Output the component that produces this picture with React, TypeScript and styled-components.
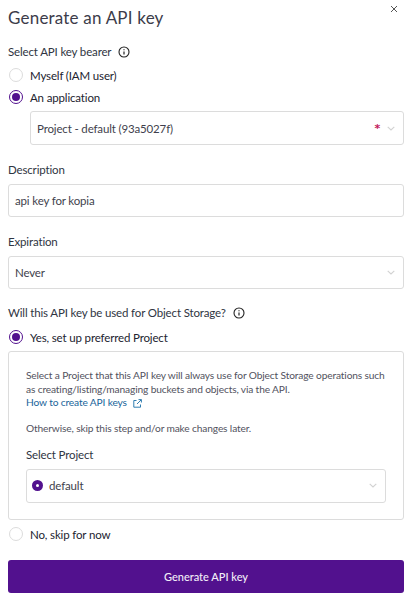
import React from "react";
import styled, { createGlobalStyle } from "styled-components";

const Global = createGlobalStyle`
  html, body { margin: 0; padding: 0; background: #fff; }
  body { font-family: Lato, "Liberation Sans", sans-serif; color: #3f3f4a; }
`;

const Page = styled.div`
  position: relative;
  width: 412px;
  height: 596px;
  box-sizing: border-box;
  padding: 0 8px;
  overflow: hidden;
  display: flex;
  flex-direction: column;
  font-size: 11.5px;
  letter-spacing: -0.15px;
`;

const Title = styled.h1`
  margin: 0;
  height: 35px;
  line-height: 35px;
  font-size: 17px;
  font-weight: 400;
  letter-spacing: 0.2px;
  color: #3c3c4a;
`;

const CloseButton = styled.button`
  position: absolute;
  top: 5px;
  right: 12px;
  width: 10px;
  height: 10px;
  padding: 0;
  border: 0;
  background: none;
  display: flex;
`;

const Label = styled.div<{ $top: number; $bottom: number }>`
  margin-top: ${(p) => p.$top}px;
  margin-bottom: ${(p) => p.$bottom}px;
  height: 18px;
  line-height: 18px;
  display: flex;
  align-items: center;
  gap: 7px;
  color: #2f3542;
`;

const RadioRow = styled.label<{ $height: number }>`
  height: ${(p) => p.$height}px;
  flex: none;
  display: flex;
  align-items: center;
  gap: 7px;
  padding-left: 1px;
  color: #22232f;
`;

const RadioDot = styled.span<{ $on?: boolean }>`
  width: 14px;
  height: 14px;
  flex: none;
  box-sizing: border-box;
  border-radius: 50%;
  border: ${(p) => (p.$on ? "1.5px solid #52118e" : "1.5px solid #dcdcdc")};
  background: #fff;
  display: flex;
  align-items: center;
  justify-content: center;
  &::after {
    content: "";
    display: ${(p) => (p.$on ? "block" : "none")};
    width: 8px;
    height: 8px;
    border-radius: 50%;
    background: #52118e;
  }
`;

const Field = styled.div<{ $indent?: number; $height?: number; $top?: number }>`
  margin-left: ${(p) => p.$indent ?? 0}px;
  margin-top: ${(p) => p.$top ?? 0}px;
  height: ${(p) => p.$height ?? 33}px;
  flex: none;
  box-sizing: border-box;
  border: 1px solid #dcdcdc;
  border-radius: 3px;
  background: #fff;
  display: flex;
  align-items: center;
  padding: 0 8px 0 6px;
  color: #3f3f4d;
`;

const FieldText = styled.span`
  flex: 1;
`;

const Required = styled.span`
  color: #c2185b;
  font-size: 11px;
  font-weight: 700;
  line-height: 1;
  margin-right: 7px;
  font-family: "DejaVu Sans", sans-serif;
`;

const ProjectDot = styled.span`
  width: 11px;
  height: 11px;
  flex: none;
  border-radius: 50%;
  background: #52118e;
  margin: 0 6px 0 -1px;
  display: flex;
  align-items: center;
  justify-content: center;
  &::after {
    content: "";
    width: 3px;
    height: 3px;
    border-radius: 50%;
    background: #fff;
  }
`;

const Panel = styled.div`
  margin-top: 2px;
  height: 169px;
  flex: none;
  box-sizing: border-box;
  border: 1px solid #dcdcdc;
  border-radius: 3px;
  padding: 17px 17px 0;
  display: flex;
  flex-direction: column;
`;

const Help = styled.p`
  margin: 0 -12px 0 0;
  font-size: 10.2px;
  letter-spacing: -0.14px;
  line-height: 13.7px;
  color: #52525e;
`;

const HelpLink = styled.a`
  display: inline-flex;
  align-items: center;
  gap: 6px;
  color: #17649a;
`;

const SpacedHelp = styled(Help)`
  margin-top: 12px;
`;

const SubmitButton = styled.button`
  margin-top: 12px;
  height: 33px;
  flex: none;
  border: 0;
  border-radius: 3px;
  background: #52118e;
  color: #f3eef8;
  font: 500 11px Lato, sans-serif;
`;

const Info = () => (
  <svg width="12" height="12" viewBox="0 0 12 12" fill="none" stroke="#222" strokeWidth="1.1">
    <circle cx="6" cy="6" r="5" />
    <path d="M6 5.4v3M6 3.2v1" strokeWidth="1.2" />
  </svg>
);

const Chevron = () => (
  <svg width="8" height="5" viewBox="0 0 8 5" fill="none" stroke="#d2d2d2" strokeWidth="1.1">
    <path d="M.7.8L4 4l3.3-3.2" />
  </svg>
);

const External = () => (
  <svg width="9" height="9" viewBox="0 0 9 9" fill="none" stroke="#1a6fa8" strokeWidth="0.9">
    <path d="M3.5 1.5H.8v6.7h6.7V5.5M4 5l4.2-4.2M5.5.6h2.9v2.9" />
  </svg>
);

export default function App() {
  return (
    <Page>
      <Global />
      <Title>Generate an API key</Title>
      <CloseButton aria-label="Close">
        <svg width="8" height="8" viewBox="0 0 8 8" stroke="#555" strokeWidth="1" fill="none">
          <path d="M1 1l6 6M7 1L1 7" />
        </svg>
      </CloseButton>

      <Label $top={8} $bottom={3}>
        Select API key bearer <Info />
      </Label>
      <RadioRow $height={22}>
        <RadioDot />
        Myself (IAM user)
      </RadioRow>
      <RadioRow $height={22}>
        <RadioDot $on />
        An application
      </RadioRow>
      <Field $indent={22} $height={34} $top={3}>
        <FieldText>Project - default (93a5027f)</FieldText>
        <Required>*</Required>
        <Chevron />
      </Field>

      <Label $top={16} $bottom={5}>Description</Label>
      <Field $height={33}>api key for kopia</Field>

      <Label $top={16} $bottom={5}>Expiration</Label>
      <Field $height={33}>
        <FieldText>Never</FieldText>
        <Chevron />
      </Field>

      <Label $top={15} $bottom={3}>
        Will this API key be used for Object Storage? <Info />
      </Label>
      <RadioRow $height={24}>
        <RadioDot $on />
        Yes, set up preferred Project
      </RadioRow>
      <Panel>
        <Help>
          Select a Project that this API key will always use for Object Storage operations such
          <br />
          as creating/listing/managing buckets and objects, via the API.
          <br />
          <HelpLink>
            How to create API keys <External />
          </HelpLink>
        </Help>
        <SpacedHelp>Otherwise, skip this step and/or make changes later.</SpacedHelp>
        <Label $top={10} $bottom={5}>Select Project</Label>
        <Field $height={34}>
          <ProjectDot />
          <FieldText>default</FieldText>
          <Chevron />
        </Field>
      </Panel>
      <RadioRow $height={28}>
        <RadioDot />
        No, skip for now
      </RadioRow>
      <SubmitButton>Generate API key</SubmitButton>
    </Page>
  );
}
